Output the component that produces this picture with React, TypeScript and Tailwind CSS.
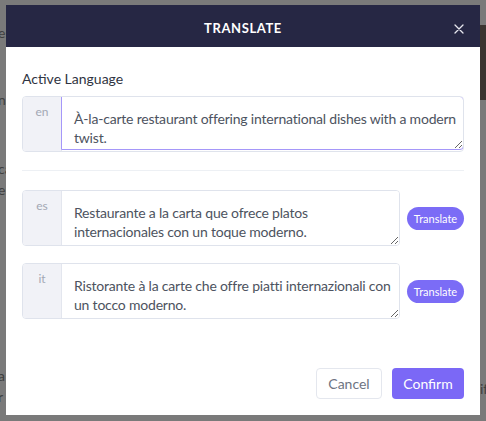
import React from "react";

const font = { fontFamily: "Lato, 'Noto Sans', sans-serif" };

function Row({
  code,
  text,
  active,
}: {
  code: string;
  text: string;
  active?: boolean;
}) {
  return (
    <div className="flex h-[56px] w-full rounded-[4px] border border-[#dfe3ec] bg-white overflow-hidden">
      <div className="w-[39px] shrink-0 bg-[#f1f2f7] text-center pt-[6px] text-[12px] text-[#a3a8b4] border-r border-[#e3e6ee]">
        {code}
      </div>
      <textarea
        defaultValue={text}
        spellCheck={false}
        className={
          "flex-1 h-full resize pl-[12px] pr-[4px] pt-[12px] text-[14px] leading-[19px] tracking-[-0.2px] text-[#4d5360] outline-none bg-white " +
          (active ? "border border-[#a597f9] rounded-r-[4px] -m-px" : "")
        }
        style={font}
      />
    </div>
  );
}

export default function App() {
  return (
    <div className="relative w-[486px] h-[421px] overflow-hidden bg-[#7a7a7a]" style={font}>
      {/* faint page behind the overlay */}
      <div className="flex h-full justify-between text-[14px] text-[#3f3f3f]">
        <div className="flex flex-col w-[6px] overflow-hidden">
          <div className="h-[22px]" />
          <div className="-ml-[2px]">es</div>
          <div className="h-[46px]" />
          <div className="-ml-[2px]">na</div>
          <div className="h-[48px]" />
          <div className="-ml-[2px]">ca</div>
          <div className="-ml-[2px]">er</div>
          <div className="h-[165px]" />
          <div className="-ml-[2px]">a</div>
          <div className="-ml-[2px]">r</div>
        </div>
        <div className="flex flex-col w-[6px] overflow-hidden">
          <div className="h-[25px]" />
          <div className="h-[75px] bg-[#3b3430]" />
          <div className="h-[278px]" />
          <div>if</div>
        </div>
      </div>

      <div className="absolute left-[6px] top-[5px] w-[474px] h-[410px] bg-white flex flex-col">
        <div className="relative h-[42px] bg-[#262744] flex items-center justify-center pt-[5px]">
          <span className="text-white text-[13px] font-bold tracking-[0.6px]">TRANSLATE</span>
          <svg
            className="absolute right-[16px] top-[19px]"
            width="10"
            height="10"
            viewBox="0 0 10 10"
          >
            <path d="M1 1L9 9M9 1L1 9" stroke="#e6e7ee" strokeWidth="1.3" strokeLinecap="round" />
          </svg>
        </div>

        <div className="flex flex-col flex-1 px-[16px] pt-[22px] pb-[16px]">
          <div className="text-[14px] leading-[20px] text-[#2f3442] mb-[7px]">Active Language</div>
          <Row
            code="en"
            active
            text="À-la-carte restaurant offering international dishes with a modern twist."
          />
          <div className="h-px bg-[#edf0f4] mt-[18px] mb-[19px]" />

          <div className="flex items-center gap-[7px]">
            <div className="w-[378px] h-[56px] shrink-0">
              <Row code="es" text="Restaurante a la carta que ofrece platos internacionales con un toque moderno." />
            </div>
            <button className="w-[57px] h-[23px] rounded-full bg-[#7b6cf6] text-white text-[11px] leading-none">
              Translate
            </button>
          </div>

          <div className="flex items-center gap-[7px] mt-[17px]">
            <div className="w-[378px] h-[56px] shrink-0">
              <Row code="it" text="Ristorante à la carte che offre piatti internazionali con un tocco moderno." />
            </div>
            <button className="w-[57px] h-[23px] rounded-full bg-[#7b6cf6] text-white text-[11px] leading-none">
              Translate
            </button>
          </div>

          <div className="flex-1" />
          <div className="flex justify-end gap-[10px]">
            <button className="w-[66px] h-[31px] rounded-[4px] border border-[#e4e7ee] bg-white text-[14px] text-[#6e7482]">
              Cancel
            </button>
            <button className="w-[72px] h-[31px] rounded-[4px] bg-[#7b68f6] text-[14px] text-white">
              Confirm
            </button>
          </div>
        </div>
      </div>
    </div>
  );
}
